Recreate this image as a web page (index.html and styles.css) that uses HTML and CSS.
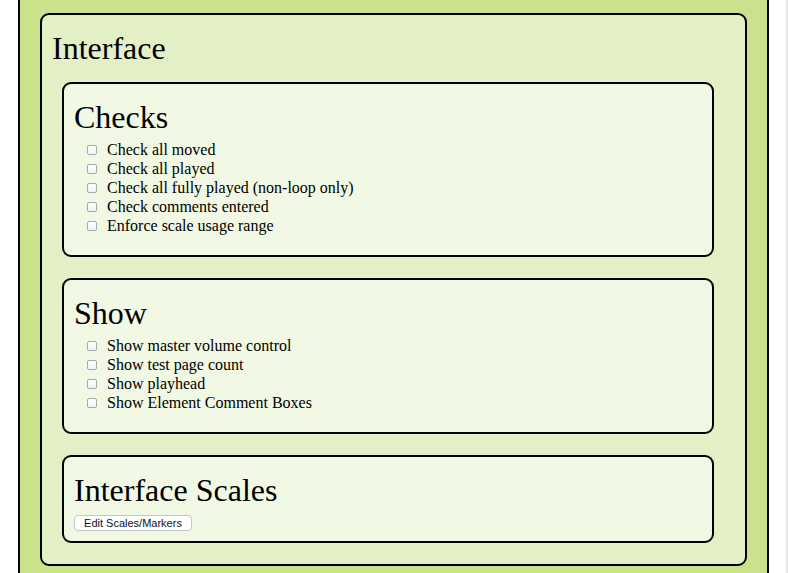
FILE: index.html
```html
<!DOCTYPE html>
<html>
<head>
<meta charset="utf-8">
<link rel="stylesheet" href="styles.css">
</head>
<body>
<div class="page">
  <div class="outer">
    <div class="panel">
      <h1 class="title">Interface</h1>
      <div class="group">
        <h2 class="title">Checks</h2>
        <ul class="opts">
          <li><span class="cb"></span>Check all moved</li>
          <li><span class="cb"></span>Check all played</li>
          <li><span class="cb"></span>Check all fully played (non-loop only)</li>
          <li><span class="cb"></span>Check comments entered</li>
          <li><span class="cb"></span>Enforce scale usage range</li>
        </ul>
      </div>
      <div class="group">
        <h2 class="title">Show</h2>
        <ul class="opts">
          <li><span class="cb"></span>Show master volume control</li>
          <li><span class="cb"></span>Show test page count</li>
          <li><span class="cb"></span>Show playhead</li>
          <li><span class="cb"></span>Show Element Comment Boxes</li>
        </ul>
      </div>
      <div class="group group-last">
        <h2 class="title">Interface Scales</h2>
        <div class="actions"><button class="btn">Edit Scales/Markers</button></div>
      </div>
    </div>
  </div>
  <div class="spacer"></div>
  <div class="track"></div>
</div>
</body>
</html>
```

FILE: styles.css
```css
html, body {
  margin: 0;
  padding: 0;
  background: #ffffff;
  height: 573px;
  overflow: hidden;
}
.page {
  display: flex;
  height: 573px;
  font-family: "Liberation Serif", "Times New Roman", serif;
  color: #000;
}
.outer {
  margin-left: 18px;
  margin-top: -9px;
  width: 751px;
  box-sizing: border-box;
  border: 2px solid #000;
  border-bottom: 0;
  background: #cae28c;
  padding: 20px 20px 7px;
  align-self: flex-start;
}
.panel {
  box-sizing: border-box;
  width: 707px;
  background: #e3f0c6;
  border: 2px solid #000;
  border-radius: 9px;
  padding: 15px 10px 21px;
}
.title {
  margin: 0;
  font-size: 32px;
  font-weight: normal;
  line-height: 36px;
}
.panel > .title {
  margin-bottom: 16px;
}
.group {
  box-sizing: border-box;
  width: 652px;
  margin-left: 10px;
  margin-bottom: 21px;
  background: #f1f8e3;
  border: 2px solid #000;
  border-radius: 9px;
  padding: 15px 10px 20px;
}
.group-last {
  margin-bottom: 0;
  padding-bottom: 10px;
}
.opts {
  list-style: none;
  margin: 5px 0 0;
  padding: 0 0 0 13px;
}
.opts li {
  display: flex;
  align-items: center;
  height: 19px;
  font-size: 16px;
  line-height: 19px;
}
.cb {
  box-sizing: border-box;
  width: 10px;
  height: 10px;
  margin-right: 10px;
  border: 1px solid #a9a9a9;
  border-radius: 2px;
  background: linear-gradient(#ffffff, #f2f2f2);
}
.actions {
  margin-top: 7px;
  display: flex;
}
.btn {
  box-sizing: border-box;
  height: 16px;
  width: 118px;
  padding: 0;
  font-family: "Liberation Sans", Arial, sans-serif;
  font-size: 11px;
  line-height: 14px;
  color: #111;
  background: #ffffff;
  border: 1px solid #c4c4c4;
  border-radius: 4px;
}
.spacer {
  flex: 1;
}
.track {
  width: 2px;
  background: #e6e6e6;
}
```
